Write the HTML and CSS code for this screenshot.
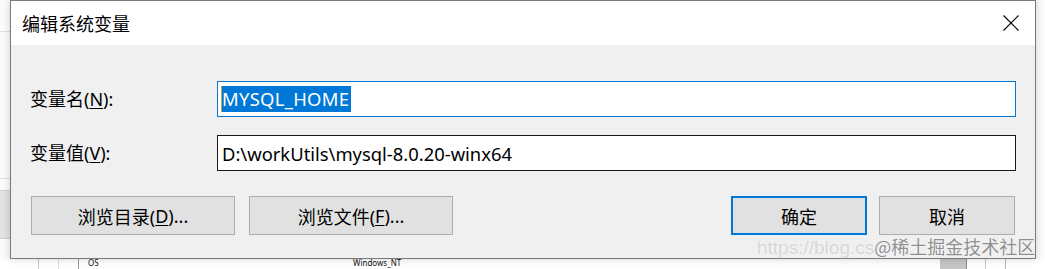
FILE: index.html
```html
<!DOCTYPE html>
<html lang="zh-CN">
<head>
<meta charset="utf-8">
<title>编辑系统变量</title>
<link rel="stylesheet" href="styles.css">
</head>
<body>
<div class="screen">
  <div class="backdrop">
    <div class="bg-line bg-line-top"></div>
    <div class="bg-line bg-line-mid"></div>
    <div class="bg-block"></div>
    <div class="list-row">
      <span class="col-line l1"></span>
      <span class="col-line l2"></span>
      <span class="col-line l3"></span>
      <span class="cell c-os">OS</span>
      <span class="cell c-val">Windows_NT</span>
      <span class="sb-block"></span>
      <span class="col-line r1"></span>
      <span class="col-line r2"></span>
      <span class="col-line r3"></span>
    </div>
  </div>

  <div class="dialog">
    <div class="titlebar">
      <span class="title">编辑系统变量</span>
      <svg class="close" width="16" height="16" viewBox="0 0 16 16" aria-hidden="true">
        <path d="M0.5 0.5 L15.5 15.5 M15.5 0.5 L0.5 15.5" stroke="#000" stroke-width="1.1" fill="none"/>
      </svg>
    </div>
    <div class="body">
      <div class="form">
        <label class="label">变量名(<u>N</u>):</label>
        <div class="input focused"><span class="caret"></span><span class="sel">MYSQL_HOME</span></div>
        <label class="label">变量值(<u>V</u>):</label>
        <div class="input">D:\workUtils\mysql-8.0.20-winx64</div>
      </div>
      <div class="actions">
        <div class="left-btns">
          <button class="btn wide">浏览目录(<u>D</u>)...</button>
          <button class="btn wide">浏览文件(<u>F</u>)...</button>
        </div>
        <div class="right-btns">
          <button class="btn narrow default">确定</button>
          <button class="btn narrow">取消</button>
        </div>
      </div>
    </div>
  </div>

  <div class="watermark"><span class="wm-url">https://blog.cs</span><span class="wm-brand">@稀土掘金技术社区</span></div>
</div>
</body>
</html>
```

FILE: styles.css
```css
* { box-sizing: border-box; }

html, body {
  margin: 0;
  padding: 0;
}

body {
  width: 1045px;
  height: 269px;
  overflow: hidden;
  background: #f7f7f7;
  font-family: "Noto Sans", "Noto Sans CJK SC", sans-serif;
  color: #000;
}

.screen {
  position: relative;
  width: 1045px;
  height: 269px;
  overflow: hidden;
}

/* ---------- background window (behind the dialog) ---------- */
.backdrop {
  position: absolute;
  inset: 0;
  background: #fbfbfb;
}

.bg-line {
  position: absolute;
  left: 0;
  width: 12px;
  height: 1px;
  background: #e0e0e0;
}
.bg-line-top { top: 31px; }
.bg-line-mid { top: 178px; }

.bg-block {
  position: absolute;
  left: 0;
  top: 190px;
  width: 12px;
  height: 49px;
  background: #e2e2e2;
  border-top: 1px solid #d0d0d0;
  border-bottom: 1px solid #d0d0d0;
}

.list-row {
  position: absolute;
  left: 0;
  top: 259px;
  width: 1045px;
  height: 10px;
  background: #ffffff;
}

.col-line {
  position: absolute;
  top: 0;
  width: 1px;
  height: 10px;
  background: #c8c8c8;
}
.col-line.l1 { left: 38px; }
.col-line.l2 { left: 58px; background: #e0e0e0; }
.col-line.l3 { left: 78px; background: #9a9a9a; }
.col-line.r1 { left: 966px; background: #8a8a8a; }
.col-line.r2 { left: 985px; background: #c8c8c8; }
.col-line.r3 { left: 1005px; background: #b8b8b8; }

.cell {
  position: absolute;
  top: 0;
  font-size: 8px;
  line-height: 8px;
  color: #111;
}
.c-os { left: 88px; }
.c-val { left: 353px; }

.sb-block {
  position: absolute;
  left: 940px;
  top: 0;
  width: 26px;
  height: 10px;
  background: #c6c6c6;
}

/* ---------- dialog ---------- */
.dialog {
  position: relative;
  margin-left: 10px;
  width: 1026px;
  height: 259px;
  border: 1px solid #7a7a7a;
  background: #f0f0f0;
  box-shadow: 0 0 8px rgba(0, 0, 0, 0.18);
  display: flex;
  flex-direction: column;
}

.titlebar {
  height: 44px;
  background: #ffffff;
  display: flex;
  align-items: center;
  justify-content: space-between;
  padding: 0 16px 0 11px;
}

.title {
  font-family: "Noto Sans CJK SC", sans-serif;
  font-size: 18px;
  line-height: 24px;
  color: #000;
}

.close {
  display: block;
}

.body {
  flex: 1;
  padding: 36px 19px 0 19px;
  display: flex;
  flex-direction: column;
}

.form {
  display: grid;
  grid-template-columns: 187px 1fr;
  row-gap: 18px;
  align-items: center;
}

.label {
  font-size: 18px;
  line-height: 24px;
  color: #000;
}
.label u, .btn u {
  text-decoration: underline;
  text-underline-offset: 2px;
  text-decoration-thickness: 1px;
}

.input {
  height: 36px;
  background: #ffffff;
  border: 1px solid #1a1a1a;
  padding: 0 4px;
  display: flex;
  align-items: center;
  font-size: 18.4px;
  color: #000;
  white-space: nowrap;
}
.input.focused {
  border-color: #0078d7;
  padding-left: 3px;
}

.caret {
  width: 1px;
  height: 26px;
  background: #d8a040;
}

.sel {
  background: #0078d7;
  color: #ffffff;
  line-height: 26px;
  padding-right: 2px;
  letter-spacing: 0.3px;
}

.actions {
  margin-top: 25px;
  display: flex;
  justify-content: space-between;
}

.left-btns, .right-btns {
  display: flex;
}
.left-btns { gap: 14px; margin-left: 1px; }
.right-btns { gap: 12px; margin-right: 1px; }

.btn {
  height: 39px;
  background: #e1e1e1;
  border: 1px solid #adadad;
  font-family: "Noto Sans", "Noto Sans CJK SC", sans-serif;
  font-size: 18px;
  color: #000;
  padding: 0;
  display: flex;
  align-items: center;
  justify-content: center;
}
.btn.wide { width: 204px; }
.btn.narrow { width: 136px; }
.btn.default {
  border: 2px solid #0078d7;
}

/* ---------- watermark overlay ---------- */
.watermark {
  position: absolute;
  left: 757px;
  top: 233px;
  display: flex;
  align-items: baseline;
  white-space: nowrap;
  pointer-events: none;
}
.wm-url {
  font-family: "Liberation Sans", sans-serif;
  font-size: 19px;
  color: #d6d6d6;
  text-shadow: 0 0 1px #fff;
}
.wm-brand {
  font-family: "Noto Sans CJK SC", sans-serif;
  font-size: 18px;
  color: #8f8f8f;
  text-shadow: 0 0 1px #fff, 0 0 1px #fff;
}
```
